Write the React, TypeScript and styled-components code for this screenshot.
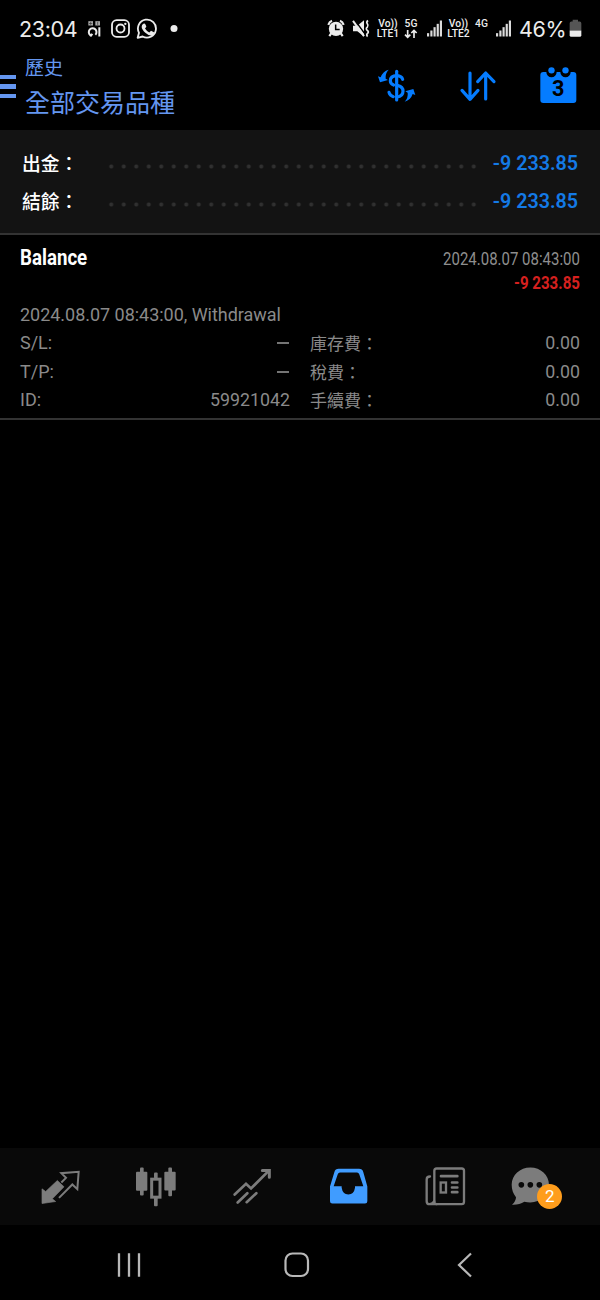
import React from "react";
import styled, { createGlobalStyle } from "styled-components";

const GlobalStyle = createGlobalStyle`
  html, body { margin: 0; background: #000; }
  * { box-sizing: border-box; }
  svg { display: block; flex: none; }
`;

const latin = `Roboto, "Noto Sans CJK TC", sans-serif`;

const Screen = styled.div`
  width: 600px;
  height: 1300px;
  display: flex;
  flex-direction: column;
  background: #000;
  color: #fff;
  font-family: ${latin};
  overflow: hidden;
`;

/* ---------- status bar ---------- */

const StatusBar = styled.div`
  height: 57px;
  display: flex;
  align-items: center;
  justify-content: space-between;
  padding: 0 18px 0 19px;
  color: #ececec;
`;

const StatusGroup = styled.div`
  display: flex;
  align-items: center;
`;

const Slot = styled.div<{ $w: number; $gap?: number }>`
  width: ${(p) => p.$w}px;
  margin-left: ${(p) => p.$gap ?? 0}px;
  flex: none;
`;

const StatusText = styled.div`
  font: 400 21.5px/26px Inter, sans-serif;
  white-space: nowrap;
  letter-spacing: -0.35px;
`;

const NetLabel = styled.div`
  height: 22px;
  font: 500 10.3px/10px Roboto, sans-serif;
  text-align: center;
  white-space: nowrap;
  padding-top: 1px;
`;

/* ---------- title bar ---------- */

const TitleBar = styled.header`
  height: 73px;
  display: flex;
  align-items: flex-start;
  padding-right: 20px;
`;

const MenuButton = styled.div`
  width: 16px;
  margin-top: 18px;
  display: flex;
  flex-direction: column;
  gap: 5.3px;
`;

const MenuLine = styled.div`
  height: 4.2px;
  background: #6496f0;
`;

const Titles = styled.div`
  flex: 1;
  padding-left: 9px;
  color: #6496f0;
  font-family: "Noto Sans CJK TC", sans-serif;
  font-weight: 400;
`;

const Section = styled.div`
  font-size: 19px;
  line-height: 20px;
`;

const Heading = styled.div`
  font-size: 25px;
  line-height: 32px;
  margin-top: 8px;
`;

const Actions = styled.div`
  display: flex;
  gap: 39px;
  padding-top: 8px;
`;

/* ---------- summary ---------- */

const Summary = styled.section`
  height: 105px;
  background: #131313;
  border-bottom: 2px solid #333;
  padding: 14px 22px 0;
`;

const SummaryRow = styled.div`
  display: flex;
  align-items: center;
  height: 38.3px;
`;

const SummaryLabel = styled.div`
  width: 83px;
  font: 500 18.8px/28px "Noto Sans CJK TC", sans-serif;
`;

const Dots = styled.div`
  width: 375px;
  height: 5px;
  margin-top: 6px;
  background: radial-gradient(circle at center, #303030 1.4px, transparent 2.5px) 0 0 / 12.5px 5px repeat-x;
`;

const SummaryValue = styled.div`
  flex: 1;
  text-align: right;
  font-size: 19.7px;
  font-weight: 600;
  color: #147ae6;
  white-space: nowrap;
`;

/* ---------- history record ---------- */

const Record = styled.section`
  height: 185px;
  border-bottom: 2px solid #333;
  padding: 11px 20px 0;
  color: #8a8a8a;
  font-size: 18px;
`;

const RecordHead = styled.div`
  display: flex;
  justify-content: space-between;
  height: 54.5px;
`;

const HeadSide = styled.div`
  display: flex;
  flex-direction: column;
  align-items: flex-end;
  padding-top: 1px;
`;

const Condensed = styled.div<{ $size: number; $scale: number; $side: "left" | "right"; $color: string; $weight?: number }>`
  font-size: ${(p) => p.$size}px;
  font-weight: ${(p) => p.$weight ?? 400};
  line-height: 24px;
  color: ${(p) => p.$color};
  white-space: nowrap;
  transform: scaleX(${(p) => p.$scale});
  transform-origin: ${(p) => p.$side} center;
`;

const Comment = styled.div`
  line-height: 28.5px;
  letter-spacing: -0.03px;
`;

const DetailGrid = styled.div`
  display: grid;
  grid-template-columns: 270px 270px;
  column-gap: 20px;
  grid-auto-rows: 28.5px;
`;

const Detail = styled.div`
  display: flex;
  justify-content: space-between;
  line-height: 28.5px;
`;

const DetailLabel = styled.span<{ $cjk?: boolean }>`
  ${(p) => p.$cjk && `font-family: "Noto Sans CJK TC", sans-serif; font-size: 17px; line-height: 27px;`}
`;

const DetailValue = styled.span`
  font-size: 17.8px;
`;

const Dash = styled.span`
  width: 12.5px;
  height: 2px;
  margin: 13px 1px 0 0;
  background: #747474;
`;

const Filler = styled.main`
  flex: 1;
`;

/* ---------- bottom bars ---------- */

const TabBar = styled.nav`
  height: 77px;
  display: flex;
  align-items: center;
  padding: 0 12px;
  background: #090909;
`;

const Tab = styled.div`
  position: relative;
  width: 96px;
  display: flex;
  justify-content: center;
`;

const Badge = styled.div`
  position: absolute;
  left: 45px;
  top: 22px;
  width: 25.4px;
  height: 25.4px;
  border-radius: 50%;
  background: #ff9d1c;
  font-size: 17px;
  line-height: 25px;
  text-align: center;
`;

const SystemNav = styled.div`
  height: 75px;
  display: flex;
  align-items: center;
  padding: 4px 51px 0 45px;
`;

const SystemKey = styled.div`
  width: 168px;
  display: flex;
  justify-content: center;
`;

const StatusIcon = ({ x, w, children }: { x: number; w: number; children: React.ReactNode }) => (
  <svg width={w} height={22} viewBox={`${x} 52.5 ${w * 3} 66`} fill="none">{children}</svg>
);

const ActionIcon = ({ x, children }: { x: number; children: React.ReactNode }) => (
  <svg width={42} height={42} viewBox={`${x} 45 126 126`} fill="none">{children}</svg>
);

const TabIcon = ({ x, children }: { x: number; children: React.ReactNode }) => (
  <svg width={60} height={50} viewBox={`${x} 64.5 180 150`} fill="none">{children}</svg>
);

const Signal = ({ x }: { x: number }) => (
  <g fill="#dcdcdc">
    <rect x={x} y="98" width="6.5" height="10" />
    <rect x={x + 10} y="90" width="6.5" height="18" />
    <rect x={x + 19.5} y="80" width="6.5" height="28" />
    <rect x={x + 29} y="70" width="6.5" height="38" />
    <rect x={x + 38.5} y="60" width="6.5" height="48" />
  </g>
);

const VoLte = ({ n }: { n: number }) => (
  <NetLabel>Vo))<br />LTE{n}</NetLabel>
);

const details = [
  { left: "S/L:", value: null, right: "庫存費：", amount: "0.00" },
  { left: "T/P:", value: null, right: "稅費：", amount: "0.00" },
  { left: "ID:", value: "59921042", right: "手續費：", amount: "0.00" },
];

export default function App() {
  return (
    <Screen>
      <GlobalStyle />
      <StatusBar>
        <StatusGroup>
          <Slot $w={66}><StatusText>23:04</StatusText></Slot>
          <StatusIcon x={255} w={18}>
            <g fill="#a8a8a8">
              <rect x="265" y="62" width="14" height="13" />
              <rect x="286" y="62" width="14" height="13" />
            </g>
            <path d="M272 64v9M267 69h10M293 64v9" stroke="#333" strokeWidth="2" />
            <path d="M271 104a11.500 11.500 0 1 1 15-1M277 100l-6 8M298 80v28" stroke="#ececec" strokeWidth="6" />
          </StatusIcon>
          <Slot $w={21} $gap={7}>
            <StatusIcon x={330} w={21}>
              <rect x="336" y="59" width="51" height="50" rx="14" stroke="#ececec" strokeWidth="5.500" />
              <circle cx="361.500" cy="84" r="12" stroke="#ececec" strokeWidth="5.500" />
              <circle cx="376" cy="70" r="3.500" fill="#ececec" />
            </StatusIcon>
          </Slot>
          <Slot $w={22} $gap={5}>
            <StatusIcon x={408} w={22}>
              <path d="M413 112l4-15a27 27 0 1 1 11 11z" stroke="#ececec" strokeWidth="5.500" strokeLinejoin="round" />
              <path d="M430 70q4-3 6 1l3 7q0 2-4 6 5 8 13 12l5-5 9 4q1 8-8 10-8 1-18-8-11-10-11-18 0-6 5-9z" fill="#ececec" />
            </StatusIcon>
          </Slot>
          <Slot $w={9} $gap={12}>
            <StatusIcon x={510} w={9}><circle cx="522" cy="84" r="10.500" fill="#ececec" /></StatusIcon>
          </Slot>
        </StatusGroup>
        <StatusGroup>
          <StatusIcon x={51} w={18}>
            <circle cx="78" cy="85" r="21.500" fill="#ececec" />
            <path d="M55 73q3-9 11-12M90 61q8 3 11 12M64 98l-6 9M92 98l6 9" stroke="#ececec" strokeWidth="6.500" />
            <path d="M77 72v15h12" stroke="#000" strokeWidth="4.500" />
          </StatusIcon>
          <Slot $w={18} $gap={7}>
            <StatusIcon x={126} w={18}>
              <path d="M129 76h13l20-17v49l-20-16h-13z" fill="#ececec" />
              <path d="M133 57l33 45" stroke="#000" strokeWidth="4" />
              <path d="M129 61l33 46" stroke="#ececec" strokeWidth="6" />
              <path d="M174 60q-6 5-2 10t0 10q-6 5 0 10t0 9q-4 5 1 9" stroke="#ececec" strokeWidth="5" />
            </StatusIcon>
          </Slot>
          <Slot $w={24} $gap={6}><VoLte n={1} /></Slot>
          <Slot $w={16} $gap={3}>
            <NetLabel>
              5G
              <svg width={16} height={10} viewBox="0 0 48 30" fill="none">
                <path d="M14 3v23M6 17l8 8 8-8M33 27V4M25 12l8-8 8 8" stroke="#ececec" strokeWidth="5" />
              </svg>
            </NetLabel>
          </Slot>
          <Slot $w={18} $gap={7}><StatusIcon x={348} w={18}><Signal x={351} /></StatusIcon></Slot>
          <Slot $w={23} $gap={3}><VoLte n={2} /></Slot>
          <Slot $w={15} $gap={4}><NetLabel>4G</NetLabel></Slot>
          <Slot $w={17} $gap={6}><StatusIcon x={555} w={17}><Signal x={558} /></StatusIcon></Slot>
          <Slot $w={48} $gap={7}><StatusText>46%</StatusText></Slot>
          <Slot $w={13} $gap={2}>
            <StatusIcon x={777} w={13}>
              <path d="M788 58h16v5h5q5 0 5 5v22h-35V68q0-5 5-5h4z" fill="#555" />
              <path d="M779 90h35v14q0 5-5 5h-25q-5 0-5-5z" fill="#ececec" />
            </StatusIcon>
          </Slot>
        </StatusGroup>
      </StatusBar>

      <TitleBar>
        <MenuButton><MenuLine /><MenuLine /><MenuLine /></MenuButton>
        <Titles>
          <Section>歷史</Section>
          <Heading>全部交易品種</Heading>
        </Titles>
        <Actions>
          <ActionIcon x={48}>
            <g stroke="#057cff" strokeWidth="9.500" strokeLinecap="round">
              <path d="M110 64v86" />
              <path d="M128 88q-3-10-17-11-20 1-20 15 0 9 10 13M114 107q15 3 15 17 0 15-18 17M100 140q-10-3-13-13" />
            </g>
            <g fill="#057cff">
              <path d="M54 79l8 3q6-18 24-23-11 12-9 27l7 4-24 7z" />
              <path d="M166 135l-8-3q-6 18-24 23 11-12 9-27l-7-4 24-7z" />
            </g>
          </ActionIcon>
          <ActionIcon x={291}>
            <path d="M330 69v79M306 121l24 27 24-27M377 147V69M353 95l24-26 25 26" stroke="#057cff" strokeWidth="9.500" strokeLinecap="round" strokeLinejoin="round" />
          </ActionIcon>
          <ActionIcon x={534}>
            <path d="M550 66h9a15.500 15.500 0 0 0 31 0h11a15.500 15.500 0 0 0 31 0h8q9 0 9 9v75q0 9-9 9h-90q-9 0-9-9V75q0-9 9-9z" fill="#057cff" />
            <circle cx="574.500" cy="61" r="9.500" fill="#057cff" />
            <circle cx="616.500" cy="61" r="9.500" fill="#057cff" />
            <text x="595" y="139" textAnchor="middle" fontFamily="Roboto, sans-serif" fontWeight="700" fontSize="65" fill="#000">3</text>
          </ActionIcon>
        </Actions>
      </TitleBar>

      <Summary>
        {["出金：", "結餘："].map((label) => (
          <SummaryRow key={label}>
            <SummaryLabel>{label}</SummaryLabel>
            <Dots />
            <SummaryValue>-9 233.85</SummaryValue>
          </SummaryRow>
        ))}
      </Summary>

      <Record>
        <RecordHead>
          <Condensed $size={22} $scale={0.85} $side="left" $color="#fff" $weight={700}>Balance</Condensed>
          <HeadSide>
            <Condensed $size={18.5} $scale={0.81} $side="right" $color="#8e8e8e">2024.08.07 08:43:00</Condensed>
            <Condensed $size={18.5} $scale={0.815} $side="right" $color="#d6201f" $weight={700}>-9 233.85</Condensed>
          </HeadSide>
        </RecordHead>
        <Comment>2024.08.07 08:43:00, Withdrawal</Comment>
        <DetailGrid>
          {details.map((d) => (
            <React.Fragment key={d.left}>
              <Detail>
                <DetailLabel>{d.left}</DetailLabel>
                {d.value ? <DetailValue>{d.value}</DetailValue> : <Dash />}
              </Detail>
              <Detail>
                <DetailLabel $cjk>{d.right}</DetailLabel>
                <DetailValue>{d.amount}</DetailValue>
              </Detail>
            </React.Fragment>
          ))}
        </DetailGrid>
      </Record>

      <Filler />

      <TabBar>
        <Tab>
          <TabIcon x={30}>
            <path d="M66 145l11 8 35-33 20 19-35 36 10 8-41 6z" fill="#7c7c7c" stroke="#7c7c7c" strokeWidth="2" />
            <path d="M124 126l14-14-14-14 52-4-4 52-15-14-40 40" stroke="#7c7c7c" strokeWidth="6" />
          </TabIcon>
        </Tab>
        <Tab>
          <TabIcon x={318}>
            <g fill="#7c7c7c">
              <rect x="348" y="94" width="34" height="57" rx="3" />
              <rect x="360" y="81" width="11" height="84" rx="3" />
              <rect x="433" y="94" width="34" height="56" rx="3" />
              <rect x="445" y="81" width="11" height="86" rx="3" />
              <rect x="402" y="96" width="11" height="18" rx="3" />
              <rect x="402" y="170" width="11" height="27" rx="3" />
            </g>
            <rect x="395" y="116" width="25" height="54" stroke="#7c7c7c" strokeWidth="9" />
          </TabIcon>
        </Tab>
        <Tab>
          <TabIcon x={606}>
            <path d="M644 162l34-32 15 14 53-53M653 186l29-28M680 185l29-27" stroke="#7c7c7c" strokeWidth="8" strokeLinecap="round" />
            <path d="M727 90h21v20" stroke="#7c7c7c" strokeWidth="9" strokeLinecap="round" />
          </TabIcon>
        </Tab>
        <Tab>
          <TabIcon x={54}>
            <path fillRule="evenodd" d="M90 138l13-43q3-10 13-10h61q10 0 13 10l12 43v44q0 7-7 7H97q-7 0-7-7zM101 137h24v5q3 20 20 20t20-20v-5h25l-12-35q-2-6-7-6h-51q-5 0-7 6z" fill="#409cff" />
          </TabIcon>
        </Tab>
        <Tab>
          <TabIcon x={342}>
            <g stroke="#7c7c7c" strokeWidth="7" strokeLinecap="round">
              <rect x="403" y="84" width="89" height="107" rx="7" />
              <path d="M390 108q-10 0-10 9v65q0 9 9 9t14-9M389 191h20" />
              <path d="M423 107h49M456 126h16M456 141h16M456 155h16" strokeWidth="8" />
              <rect x="422" y="126" width="16" height="30" strokeWidth="7" />
            </g>
          </TabIcon>
        </Tab>
        <Tab>
          <TabIcon x={630}>
            <path d="M691 81c31 0 56 23 56 52s-25 53-56 53q-9 0-18-2-15 10-37 9 12-12 12-23c-8-9-13-22-13-37 0-29 25-52 56-52z" fill="#7c7c7c" />
            <g fill="#0a0a0a">
              <circle cx="664" cy="133" r="8.500" />
              <circle cx="691" cy="133" r="8.500" />
              <circle cx="718" cy="133" r="8.500" />
            </g>
          </TabIcon>
          <Badge>2</Badge>
        </Tab>
      </TabBar>

      <SystemNav>
        <SystemKey>
          <svg width={26} height={26} viewBox="0 0 26 26">
            <path d="M3 1.300v23.400M13 1.300v23.400M23 1.300v23.400" stroke="#b8b8b8" strokeWidth="2.300" />
          </svg>
        </SystemKey>
        <SystemKey>
          <svg width={26} height={26} viewBox="0 0 26 26">
            <rect x="1.500" y="1.500" width="22.500" height="22.500" rx="7" fill="none" stroke="#b8b8b8" strokeWidth="2.200" />
          </svg>
        </SystemKey>
        <SystemKey>
          <svg width={26} height={26} viewBox="0 0 26 26">
            <path d="M19 1.500L7 13l12 11.500" fill="none" stroke="#b8b8b8" strokeWidth="2.200" />
          </svg>
        </SystemKey>
      </SystemNav>
    </Screen>
  );
}
